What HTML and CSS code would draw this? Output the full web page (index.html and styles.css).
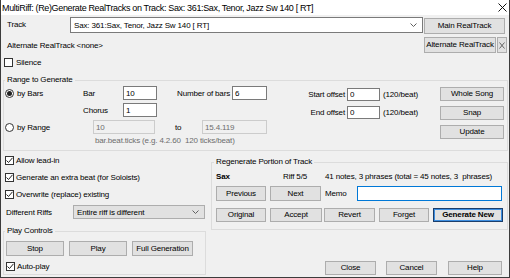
FILE: index.html
```html
<!DOCTYPE html>
<html lang="en">
<head>
  <meta charset="UTF-8" />
  <title>MultiRiff</title>
  <link rel="stylesheet" href="styles.css">
</head>
<body>

<div class="window">
  <div class="titlebar">
    <span class="title">MultiRiff: (Re)Generate RealTracks on Track: Sax: 361:Sax, Tenor, Jazz Sw 140 [ RT]</span>
    <svg class="close-x" width="9" height="9" viewBox="0 0 9 9"><path d="M0.5 0.5L8.5 8.5M8.5 0.5L0.5 8.5" stroke="#111" stroke-width="1"/></svg>
  </div>

  <div class="dialog">
    <div class="row track-row">
      <span class="track-lbl">Track</span>
      <div class="combo track-combo">
        <span>Sax: 361:Sax, Tenor, Jazz Sw 140 [ RT]</span>
        <svg class="chev" width="7" height="4" viewBox="0 0 7 4"><polyline points="0.5,0.5 3.5,3.5 6.5,0.5" fill="none" stroke="#606060"/></svg>
      </div>
      <button class="btn main-rt">Main RealTrack</button>
    </div>

    <div class="row alt-row">
      <span class="alt-lbl">Alternate RealTrack &lt;none&gt;</span>
      <button class="btn alt-rt">Alternate RealTrack</button>
      <button class="btn alt-x"><svg width="6" height="7" viewBox="0 0 6 7"><path d="M0.5 0.5L5.5 6.5M5.5 0.5L0.5 6.5" stroke="#444" stroke-width="0.8"/></svg></button>
    </div>

    <div class="check-row silence"><span class="cb"></span>Silence</div>

    <div class="group range">
      <span class="group-title">Range to Generate</span>
      <div class="range-body">
        <div class="range-left">
          <div class="rrow">
            <span class="opt"><span class="radio on"></span>by Bars</span>
            <span class="fld-lbl">Bar</span>
            <input class="edit w34" value="10">
            <span class="nbars-lbl">Number of bars</span>
            <input class="edit w35" value="6">
          </div>
          <div class="rrow">
            <span class="opt"></span>
            <span class="fld-lbl">Chorus</span>
            <input class="edit w34" value="1">
          </div>
          <div class="rrow">
            <span class="opt wide"><span class="radio"></span>by Range</span>
            <input class="edit off w62" value="10" disabled>
            <span class="to-lbl">to</span>
            <input class="edit off w65" value="15.4.119" disabled>
          </div>
          <div class="hint">bar.beat.ticks (e.g. 4.2.60&nbsp; 120 ticks/beat)</div>
        </div>

        <div class="range-mid">
          <div class="mrow">
            <span class="off-lbl">Start offset</span>
            <input class="edit w33" value="0">
            <span class="unit">(120/beat)</span>
          </div>
          <div class="mrow">
            <span class="off-lbl">End offset</span>
            <input class="edit w33" value="0">
            <span class="unit">(120/beat)</span>
          </div>
        </div>

        <div class="range-right">
          <button class="btn side">Whole Song</button>
          <button class="btn side">Snap</button>
          <button class="btn side">Update</button>
        </div>
      </div>
    </div>

    <div class="lower">
      <div class="lower-left">
        <div class="check-row opt-row"><span class="cb on"><svg width="7" height="7" viewBox="0 0 7 7"><path d="M0.5 3.5L2.5 5.5L6.5 0.8" fill="none" stroke="#222" stroke-width="1"/></svg></span>Allow lead-in</div>
        <div class="check-row opt-row"><span class="cb on"><svg width="7" height="7" viewBox="0 0 7 7"><path d="M0.5 3.5L2.5 5.5L6.5 0.8" fill="none" stroke="#222" stroke-width="1"/></svg></span>Generate an extra beat (for Soloists)</div>
        <div class="check-row opt-row"><span class="cb on"><svg width="7" height="7" viewBox="0 0 7 7"><path d="M0.5 3.5L2.5 5.5L6.5 0.8" fill="none" stroke="#222" stroke-width="1"/></svg></span>Overwrite (replace) existing</div>

        <div class="row riffs-row">
          <span class="riffs-lbl">Different Riffs</span>
          <div class="combo riffs-combo">
            <span>Entire riff is different</span>
            <svg class="chev" width="7" height="4" viewBox="0 0 7 4"><polyline points="0.5,0.5 3.5,3.5 6.5,0.5" fill="none" stroke="#606060"/></svg>
          </div>
        </div>

        <div class="group play">
          <span class="group-title">Play Controls</span>
          <div class="play-btns">
            <button class="btn stop">Stop</button>
            <button class="btn playb">Play</button>
            <button class="btn fullgen">Full Generation</button>
          </div>
          <div class="check-row autoplay"><span class="cb on"><svg width="7" height="7" viewBox="0 0 7 7"><path d="M0.5 3.5L2.5 5.5L6.5 0.8" fill="none" stroke="#222" stroke-width="1"/></svg></span>Auto-play</div>
        </div>
      </div>

      <div class="lower-right">
        <div class="group regen">
          <span class="group-title">Regenerate Portion of Track</span>
          <div class="info-row">
            <span class="trk">Sax</span>
            <span class="riff">Riff 5/5</span>
            <span>41 notes, 3 phrases (total = 45 notes, 3&nbsp; phrases)</span>
          </div>
          <div class="regen-row1">
            <button class="btn prev">Previous</button>
            <button class="btn next">Next</button>
            <span class="memo-lbl">Memo</span>
            <input class="edit memo" value="">
          </div>
          <div class="regen-row2">
            <button class="btn b-orig">Original</button>
            <button class="btn b-accept">Accept</button>
            <button class="btn b-revert">Revert</button>
            <button class="btn b-forget">Forget</button>
            <button class="btn b-gen">Generate New</button>
          </div>
        </div>

        <div class="bottom-btns">
          <button class="btn b-close">Close</button>
          <button class="btn b-cancel">Cancel</button>
          <button class="btn b-help">Help</button>
        </div>
      </div>
    </div>
  </div>
</div>

</body>
</html>
```

FILE: styles.css
```css
* { box-sizing: border-box; }
body {
  margin: 0;
  font-family: "Liberation Sans", Arial, sans-serif;
  font-size: 8px;
  letter-spacing: -0.15px;
  white-space: nowrap;
  color: #000;
  background: #fff;
}
.window {
  width: 510px;
  height: 278px;
  border: 1px solid #3c3c3c;
  border-top: 0;
  background: #f0f0f0;
  display: flex;
  flex-direction: column;
}
.titlebar {
  height: 15px;
  background: #fff;
  display: flex;
  align-items: center;
  padding: 0 2px 0 1px;
  flex-shrink: 0;
}
.title {
  font-size: 9px;
  letter-spacing: -0.35px;
}
.close-x { margin-left: auto; }

.dialog {
  flex: 1;
  padding: 0 1px 0 2px;
}
.row { display: flex; }

button, input {
  font: inherit;
  letter-spacing: inherit;
  color: inherit;
  margin: 0;
}
.btn {
  height: 14px;
  padding: 0;
  background: #e1e1e1;
  border: 1px solid #adadad;
  text-align: center;
  white-space: nowrap;
  line-height: 12px;
}
.edit {
  height: 14px;
  padding: 0 2px;
  background: #fff;
  border: 1px solid #7a7a7a;
  outline: none;
}
.edit.off {
  background: #f0f0f0;
  border-color: #cccccc;
  color: #6d6d6d;
}
.w33 { width: 33px; }
.w34 { width: 34px; }
.w35 { width: 35px; }
.w62 { width: 62px; }
.w65 { width: 65px; }

.combo {
  display: flex;
  align-items: center;
  padding: 0 5px 0 3px;
  border: 1px solid #7a7a7a;
  background: #fff;
}
.combo .chev { margin-left: auto; }

/* top rows */
.track-row {
  margin-top: 2px;
  height: 17px;
  align-items: flex-start;
}
.track-lbl {
  width: 67px;
  padding-left: 4px;
  line-height: 16px;
}
.track-combo { width: 353px; height: 16px; }
.main-rt {
  margin: 1px 0 0 1px;
  width: 81px;
  height: 16px;
}
.alt-row {
  margin-top: 3px;
  height: 16px;
  align-items: center;
}
.alt-lbl { padding-left: 4px; }
.alt-rt {
  margin-left: auto;
  width: 72px;
  height: 16px;
}
.alt-x {
  margin: 0 1px 0 1px;
  width: 10px;
  height: 16px;
  display: flex;
  align-items: center;
  justify-content: center;
}

.check-row {
  display: flex;
  align-items: center;
}
.cb {
  width: 9px;
  height: 9px;
  border: 1px solid #333;
  background: #fff;
  display: flex;
  align-items: center;
  justify-content: center;
  flex-shrink: 0;
}
.radio {
  width: 9px;
  height: 9px;
  border: 1px solid #333;
  border-radius: 50%;
  background: #fff;
  display: inline-flex;
  align-items: center;
  justify-content: center;
  margin: 0 3px 0 1px;
}
.radio.on::after {
  content: "";
  width: 5px;
  height: 5px;
  border-radius: 50%;
  background: #222;
}
.silence {
  margin-top: 4px;
  height: 11px;
}
.silence .cb { margin: 0 3px 0 1px; }

/* group boxes */
.group {
  border: 1px solid #dcdcdc;
}
.group-title {
  display: block;
  width: fit-content;
  height: 10px;
  line-height: 10px;
  margin: -6px 0 0 1px;
  padding: 0 2px;
  background: #f0f0f0;
}

.range {
  margin-top: 12px;
  height: 71px;
}
.range-body { display: flex; }
.range-left {
  width: 296px;
  padding-top: 1px;
}
.rrow {
  display: flex;
  align-items: center;
  height: 14px;
  margin-bottom: 3px;
}
.opt {
  width: 79px;
  display: flex;
  align-items: center;
}
.opt.wide { width: 89px; }
.fld-lbl { width: 40px; }
.nbars-lbl {
  margin-left: 20px;
  width: 55px;
}
.to-lbl {
  margin-left: 20px;
  width: 27px;
}
.hint {
  padding-left: 91px;
  margin-top: -1px;
  color: #6d6d6d;
}
.range-mid {
  padding-top: 3px;
}
.mrow {
  display: flex;
  align-items: center;
  height: 13px;
  margin-bottom: 5px;
}
.mrow .edit { height: 13px; margin-left: 2px; }
.off-lbl {
  width: 45px;
  text-align: right;
}
.unit { margin-left: 3px; }
.range-right {
  margin: 0 3px 0 auto;
  padding-top: 2px;
  display: flex;
  flex-direction: column;
  gap: 5px;
}
.side { width: 64px; }

/* lower part */
.lower { display: flex; }
.lower-left {
  width: 203px;
  padding-top: 1px;
}
.opt-row { height: 17px; }
.opt-row .cb { margin: 0 2px 0 2px; }
.riffs-row {
  margin-top: 2px;
  height: 14px;
  align-items: center;
}
.riffs-lbl {
  width: 70px;
  padding-left: 3px;
}
.riffs-combo {
  width: 132px;
  height: 14px;
  background: #e1e1e1;
  border-color: #adadad;
}
.play {
  margin-top: 12px;
  height: 44px;
}
.play-btns {
  display: flex;
  margin-top: 5px;
}
.play-btns .btn { height: 15px; margin-left: 5px; }
.play-btns .stop { margin-left: 2px; width: 58px; }
.playb { width: 58px; }
.fullgen { width: 61px; }
.autoplay {
  margin-top: 5px;
  height: 11px;
}
.autoplay .cb { margin: 0 2px 0 2px; }

.lower-right {
  margin-left: 5px;
  width: 297px;
}
.regen {
  margin-top: 11px;
  height: 68px;
}
.regen .group-title { margin-left: 2px; }
.info-row {
  display: flex;
  margin-top: 4px;
  height: 10px;
  align-items: center;
}
.trk {
  width: 71px;
  padding-left: 4px;
  font-weight: bold;
}
.riff { width: 42px; }
.regen-row1 {
  display: flex;
  align-items: center;
  margin-top: 5px;
  height: 15px;
}
.regen-row1 .btn { height: 15px; }
.prev { margin-left: 4px; width: 50px; }
.next { margin-left: 4px; width: 51px; }
.memo-lbl { margin-left: 4px; width: 32px; }
.memo {
  width: 145px;
  height: 15px;
  border-color: #0078d7;
}
.regen-row2 {
  display: flex;
  margin-top: 7px;
}
.b-orig { margin-left: 4px; width: 50px; }
.b-accept { margin-left: 4px; width: 52px; }
.b-revert { margin-left: 2px; width: 51px; }
.b-forget { margin-left: 4px; width: 50px; }
.b-gen {
  margin-left: 4px;
  width: 70px;
  font-weight: bold;
  border-color: #1b3e6b;
  box-shadow: inset 0 0 0 1px #3d8ee0;
}
.bottom-btns {
  display: flex;
  margin-top: 31px;
}
.b-close { margin-left: 114px; width: 51px; }
.b-cancel { margin-left: 10px; width: 51px; }
.b-help { margin-left: 11px; width: 54px; }
```
